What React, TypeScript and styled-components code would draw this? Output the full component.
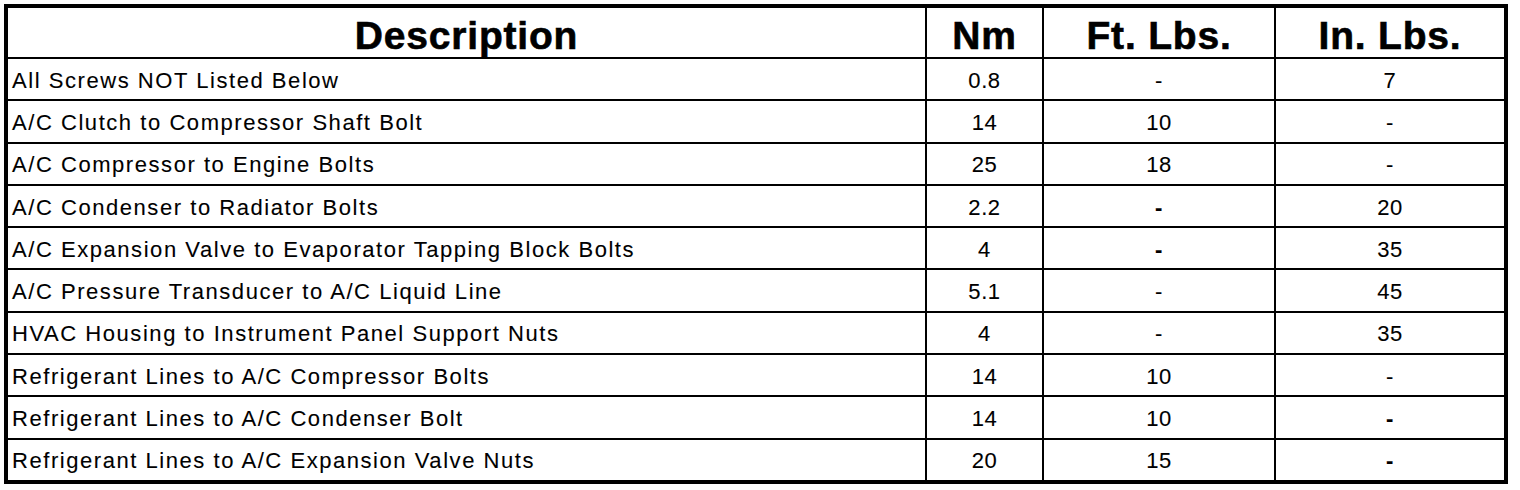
import React from "react";
import styled, { createGlobalStyle } from "styled-components";

const GlobalStyle = createGlobalStyle`
  html, body {
    margin: 0;
    padding: 0;
    background: #ffffff;
  }
  body {
    font-family: "Liberation Sans", Arial, sans-serif;
    color: #000000;
  }
`;

const Page = styled.div`
  padding: 4px;
  width: 1512px;
  box-sizing: border-box;
`;

const Table = styled.div`
  display: grid;
  grid-template-columns: 917px 115px 230px 228px;
  grid-template-rows: 49px repeat(10, 1fr);
  gap: 2px;
  width: 1504px;
  height: 480px;
  box-sizing: border-box;
  border: 4px solid #000000;
  background: #000000;
`;

const HeadCell = styled.div`
  background: #ffffff;
  display: flex;
  align-items: center;
  justify-content: center;
  padding-top: 5px;
  font-size: 39px;
  font-weight: bold;
  letter-spacing: 0.8px;
  line-height: 1;
  -webkit-text-stroke: 0.6px #000000;
`;

const Cell = styled.div<{ $left?: boolean; $bold?: boolean }>`
  background: #ffffff;
  display: flex;
  align-items: center;
  justify-content: ${(p) => (p.$left ? "flex-start" : "center")};
  padding-left: ${(p) => (p.$left ? "4px" : "0")};
  padding-top: 3px;
  font-size: 22px;
  letter-spacing: ${(p) => (p.$left ? "1.55px" : "0.6px")};
  font-weight: ${(p) => (p.$bold ? "bold" : "normal")};
  line-height: 1;
  white-space: nowrap;
  -webkit-text-stroke: 0.1px #000000;
`;

type Row = {
  desc: string;
  nm: string;
  ft: string;
  inl: string;
  boldDash?: "ft" | "in";
};

const rows: Row[] = [
  { desc: "All Screws NOT Listed Below", nm: "0.8", ft: "-", inl: "7" },
  { desc: "A/C Clutch to Compressor Shaft Bolt", nm: "14", ft: "10", inl: "-" },
  { desc: "A/C Compressor to Engine Bolts", nm: "25", ft: "18", inl: "-" },
  { desc: "A/C Condenser to Radiator Bolts", nm: "2.2", ft: "-", inl: "20", boldDash: "ft" },
  {
    desc: "A/C Expansion Valve to Evaporator Tapping Block Bolts",
    nm: "4",
    ft: "-",
    inl: "35",
    boldDash: "ft",
  },
  { desc: "A/C Pressure Transducer to A/C Liquid Line", nm: "5.1", ft: "-", inl: "45" },
  { desc: "HVAC Housing to Instrument Panel Support Nuts", nm: "4", ft: "-", inl: "35" },
  { desc: "Refrigerant Lines to A/C Compressor Bolts", nm: "14", ft: "10", inl: "-" },
  { desc: "Refrigerant Lines to A/C Condenser Bolt", nm: "14", ft: "10", inl: "-", boldDash: "in" },
  {
    desc: "Refrigerant Lines to A/C Expansion Valve Nuts",
    nm: "20",
    ft: "15",
    inl: "-",
    boldDash: "in",
  },
];

export default function App() {
  return (
    <>
      <GlobalStyle />
      <Page>
        <Table>
          <HeadCell>Description</HeadCell>
          <HeadCell>Nm</HeadCell>
          <HeadCell>Ft. Lbs.</HeadCell>
          <HeadCell>In. Lbs.</HeadCell>
          {rows.map((r) => (
            <React.Fragment key={r.desc}>
              <Cell $left>{r.desc}</Cell>
              <Cell>{r.nm}</Cell>
              <Cell $bold={r.boldDash === "ft"}>{r.ft}</Cell>
              <Cell $bold={r.boldDash === "in"}>{r.inl}</Cell>
            </React.Fragment>
          ))}
        </Table>
      </Page>
    </>
  );
}
